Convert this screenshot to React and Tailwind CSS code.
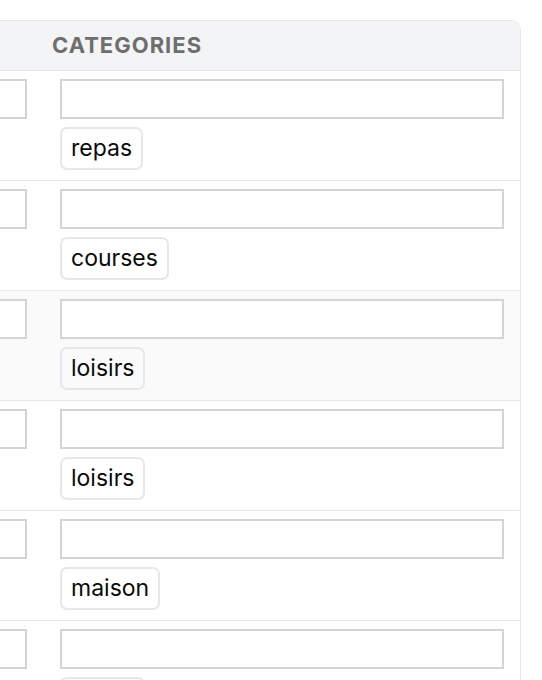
import React from "react";

const rows = [
  { cat: "repas" },
  { cat: "courses" },
  { cat: "loisirs", hover: true },
  { cat: "loisirs" },
  { cat: "maison" },
  { cat: "loisirs" },
];

export default function App() {
  return (
    <div
      className="w-[542px] h-[680px] overflow-hidden bg-white pt-[20px]"
      style={{ fontFamily: "Inter, 'Liberation Sans', sans-serif" }}
    >
      <div className="ml-[-157px] w-[678px] border-t border-r border-[#e5e7eb] rounded-tr-[10px] overflow-hidden">
        <div className="grid grid-cols-[200px_477px] h-[50px] bg-[#f3f4f6] border-b border-[#e5e7eb]">
          <div />
          <div className="flex items-center pl-[9px] pb-[1px] text-[22px] leading-none font-bold tracking-[1px] text-[#6e6e6e] uppercase">
            Categories
          </div>
        </div>
        {rows.map((r, i) => (
          <div
            key={i}
            className={
              "grid grid-cols-[200px_477px] h-[110px] border-b border-[#e5e7eb] " +
              (r.hover ? "bg-[#fafafa]" : "bg-white")
            }
          >
            <div className="pt-[8px] pl-[16px] pr-[16px]">
              <div className="h-[40px] border-2 border-[#d4d4d8] bg-white" />
            </div>
            <div className="pt-[8px] pl-[17px] pr-[16px] flex flex-col items-start gap-[8px]">
              <div className="h-[40px] w-full border-2 border-[#d4d4d8] bg-white" />
              <span className="h-[43px] inline-flex items-center px-[9px] border-2 border-[#e5e7eb] rounded-[7px] text-[23px] text-[#0a0a0a] leading-none">
                {r.cat}
              </span>
            </div>
          </div>
        ))}
      </div>
    </div>
  );
}
